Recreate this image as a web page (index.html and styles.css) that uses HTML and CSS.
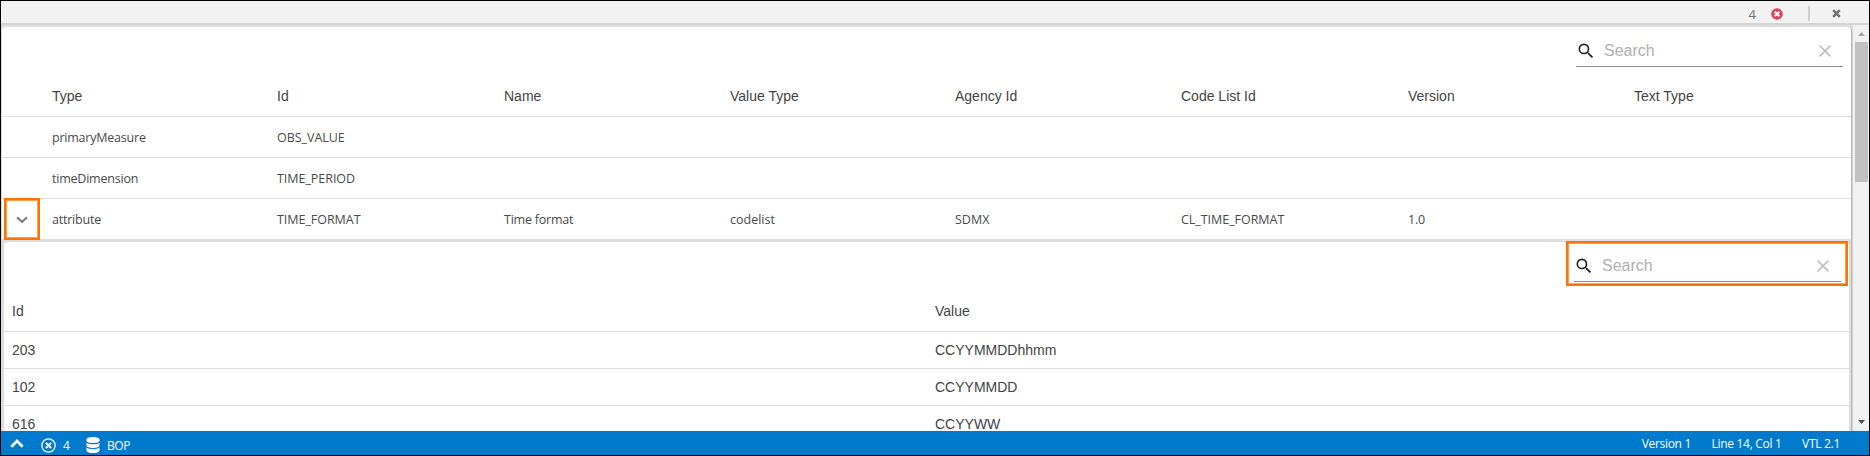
FILE: index.html
```html
<!DOCTYPE html>
<html lang="en">
<head>
<meta charset="utf-8">
<title>Structure detail</title>
<link rel="stylesheet" href="styles.css">
</head>
<body>
<div class="app">
  <header class="topbar">
    <span class="count">4</span>
    <svg class="error-icon" viewBox="0 0 12 12"><circle cx="6" cy="6" r="5.8" fill="#dd4257"/><path d="M3.7 3.7l4.6 4.6M8.3 3.7L3.7 8.3" stroke="#fff" stroke-width="2"/></svg>
    <span class="divider"></span>
    <svg class="close-icon" viewBox="0 0 9 9"><path d="M1.2 1.2l6.6 6.6M7.8 1.2L1.2 7.8" stroke="#707070" stroke-width="2.4"/></svg>
  </header>
  <main class="body">
    <div class="content">
      <section class="card">
        <div class="tools">
          <div class="search">
            <svg class="glass" viewBox="0 0 24 24"><path fill="#222" d="M15.5 14h-.79l-.28-.27A6.47 6.47 0 0 0 16 9.5 6.5 6.5 0 1 0 9.5 16c1.61 0 3.09-.59 4.23-1.57l.27.28v.79l5 4.99L20.49 19l-4.99-5zm-6 0a4.5 4.5 0 1 1 0-9 4.5 4.5 0 0 1 0 9z"/></svg>
            <span class="placeholder">Search</span>
            <svg class="clear" viewBox="0 0 12 12"><path d="M.6.6l10.8 10.8M11.4.6L.6 11.4" stroke="#bdbdbd" stroke-width="1.5"/></svg>
          </div>
        </div>
        <div class="row head"><span></span><span>Type</span><span>Id</span><span>Name</span><span>Value Type</span><span>Agency Id</span><span>Code List Id</span><span>Version</span><span>Text Type</span></div>
        <div class="row"><span></span><span>primaryMeasure</span><span class="caps">OBS_VALUE</span></div>
        <div class="row"><span></span><span>timeDimension</span><span class="caps">TIME_PERIOD</span></div>
        <div class="row last">
          <span class="toggle"><svg class="chevron" viewBox="0 0 12 8"><path d="M1 1.2l5 4.8 5-4.8" fill="none" stroke="#757575" stroke-width="1.9"/></svg></span>
          <span>attribute</span><span class="caps">TIME_FORMAT</span><span>Time format</span><span class="wide">codelist</span><span class="wide">SDMX</span><span class="caps">CL_TIME_FORMAT</span><span>1.0</span>
        </div>
        <section class="detail">
          <div class="detail-card">
            <div class="tools">
              <div class="search">
                <svg class="glass" viewBox="0 0 24 24"><path fill="#222" d="M15.5 14h-.79l-.28-.27A6.47 6.47 0 0 0 16 9.5 6.5 6.5 0 1 0 9.5 16c1.61 0 3.09-.59 4.23-1.57l.27.28v.79l5 4.99L20.49 19l-4.99-5zm-6 0a4.5 4.5 0 1 1 0-9 4.5 4.5 0 0 1 0 9z"/></svg>
                <span class="placeholder">Search</span>
                <svg class="clear" viewBox="0 0 12 12"><path d="M.6.6l10.8 10.8M11.4.6L.6 11.4" stroke="#bdbdbd" stroke-width="1.5"/></svg>
              </div>
              <div class="marker"></div>
            </div>
            <div class="pair pair-head"><span>Id</span><span>Value</span></div>
            <div class="pair"><span>203</span><span>CCYYMMDDhhmm</span></div>
            <div class="pair"><span>102</span><span>CCYYMMDD</span></div>
            <div class="pair"><span>616</span><span>CCYYWW</span></div>
          </div>
        </section>
      </section>
    </div>
    <div class="scrollbar">
      <svg class="arrow" viewBox="0 0 7 4"><path d="M0 4L3.5 0 7 4z" fill="#a3a3a3"/></svg>
      <div class="thumb"></div>
      <svg class="arrow arrow-down" viewBox="0 0 7 4"><path d="M0 0h7L3.5 4z" fill="#505050"/></svg>
    </div>
  </main>
  <footer class="status">
    <svg class="up" viewBox="0 0 14 9"><path d="M1.3 7.7L7 2l5.700 5.700" fill="none" stroke="#fff" stroke-width="2.7"/></svg>
    <svg class="errors" viewBox="0 0 15 15"><circle cx="7.500" cy="7.500" r="6.600" fill="none" stroke="#fff" stroke-width="1.300"/><path d="M4.900 4.900l5.200 5.200M10.100 4.900l-5.200 5.200" stroke="#fff" stroke-width="2"/></svg>
    <span class="errors-count">4</span>
    <svg class="db" viewBox="0 0 14 16"><g fill="#fff"><path d="M.5 2.500C.5 1.100 3.400 0 7 0s6.500 1.100 6.500 2.500v1.200C13.500 5 10.600 6 7 6S.5 5 .5 3.700z"/><path d="M.5 5.700C1.900 6.800 4.300 7.300 7 7.300s5.100-.5 6.500-1.600v2.700c0 1.400-2.900 2.500-6.500 2.500S.5 9.800.5 8.400z"/><path d="M.5 10.500c1.400 1.100 3.800 1.700 6.500 1.700s5.100-.6 6.500-1.700v2.900c0 1.400-2.900 2.600-6.500 2.600S.5 14.800.5 13.400z"/></g></svg>
    <span class="source">BOP</span>
    <div class="info"><span>Version 1</span><span>Line 14, Col 1</span><span>VTL 2.1</span></div>
  </footer>
</div>
</body>
</html>
```

FILE: styles.css
```css
* { box-sizing: border-box; }
body { margin: 0; font-family: "Liberation Sans", Arial, sans-serif; font-size: 14px; color: #444; }
svg { display: block; flex: none; }
.app { display: flex; flex-direction: column; width: 1870px; height: 456px; border: 1px solid #000; overflow: hidden; background: #dedede; }

.topbar { flex: none; display: flex; align-items: center; justify-content: flex-end; height: 24px; padding: 0 28px 0 0; background: #f2f2f2; border-bottom: 2px solid #d3d3d3; }
.count { font: 13px/22px "Open Sans", sans-serif; color: #777; margin: 4px 15px 0 0; }
.error-icon { width: 12px; height: 12px; margin: 4px 25px 0 0; }
.divider { width: 2px; height: 15px; background: #cfcfcf; margin: 3px 22px 0 0; }
.close-icon { width: 9px; height: 9px; margin-top: 2px; }

.body { flex: 1; min-height: 0; display: flex; }
.content { flex: 1; min-width: 0; padding: 2px 2px 0 1px; overflow: hidden; }
.card { width: 1849px; background: #fff; border-radius: 4px; box-shadow: 1px 1px 2px rgba(0, 0, 0, .22); }
.tools { display: flex; justify-content: flex-end; height: 40px; padding-right: 8px; position: relative; }
.search { display: flex; align-items: center; width: 267px; height: 40px; padding: 8px 12px 0 0; border-bottom: 1px solid #8c8c8c; }
.glass { width: 20px; height: 20px; margin-right: 8px; }
.placeholder { flex: 1; font-size: 16px; color: #b0b0b0; line-height: 20px; }
.clear { width: 12px; height: 12px; margin-top: 1px; }

.row { display: grid; grid-template-columns: 50px 225px 227px 226px 225px 226px 227px 226px 1fr; align-items: center; height: 41px; width: 1849px; padding-top: 1px; border-bottom: 1px solid #dedede; font: 12.5px/20px "Open Sans", "Segoe UI", sans-serif; letter-spacing: -.22px; color: #4a4a4a; }
.caps { letter-spacing: -.04px; }
.wide { letter-spacing: 0; }
.row.head { height: 50px; padding-top: 8px; font: 14px/20px "Liberation Sans", Arial, sans-serif; letter-spacing: 0; color: #444; }
.row.last { height: 40px; border-bottom: 0; padding-top: 1px; }
.toggle { display: flex; align-items: center; justify-content: center; width: 36px; height: 42px; margin: -2px 0 -1px 2px; border: 2px solid #ff7400; outline: 1px solid #ff9d4a; outline-offset: -3px; }
.chevron { width: 12px; height: 8px; margin-top: 1px; }

.detail { padding: 3px 2px 0; background: #dedede; }
.detail-card { background: #fff; border-radius: 4px 4px 0 0; }
.marker { position: absolute; right: 1px; top: -1px; width: 282px; height: 45px; border: 2px solid #ff7400; outline: 1px solid #ff9d4a; outline-offset: -3px; }
.pair { display: grid; grid-template-columns: 923px 1fr; align-items: center; height: 37px; padding-left: 8px; border-bottom: 1px solid #dedede; line-height: 20px; }
.pair-head { height: 50px; padding-top: 8px; }

.scrollbar { flex: none; display: flex; flex-direction: column; align-items: center; width: 16px; background: #f1f1f1; padding-top: 7px; }
.arrow { width: 7px; height: 4px; }
.thumb { width: 13px; height: 140px; margin-top: 6px; background: #c1c1c1; }
.arrow-down { margin: auto 0 7px; }

.status { flex: none; display: flex; align-items: center; height: 24px; padding: 5px 29px 0 9px; background: #007acc; color: #fff; font: 12px/18px "Open Sans", "Segoe UI", sans-serif; }
.up { width: 14px; height: 9px; margin-top: -4px; }
.errors { width: 15px; height: 15px; margin: -1px 0 0 17px; }
.errors-count { margin-left: 7px; }
.db { width: 14px; height: 16px; margin: -1px 0 0 16px; }
.source { margin-left: 7px; letter-spacing: -.4px; }
.info { display: flex; gap: 20.5px; margin: -3px 0 0 auto; letter-spacing: -.3px; }
```
